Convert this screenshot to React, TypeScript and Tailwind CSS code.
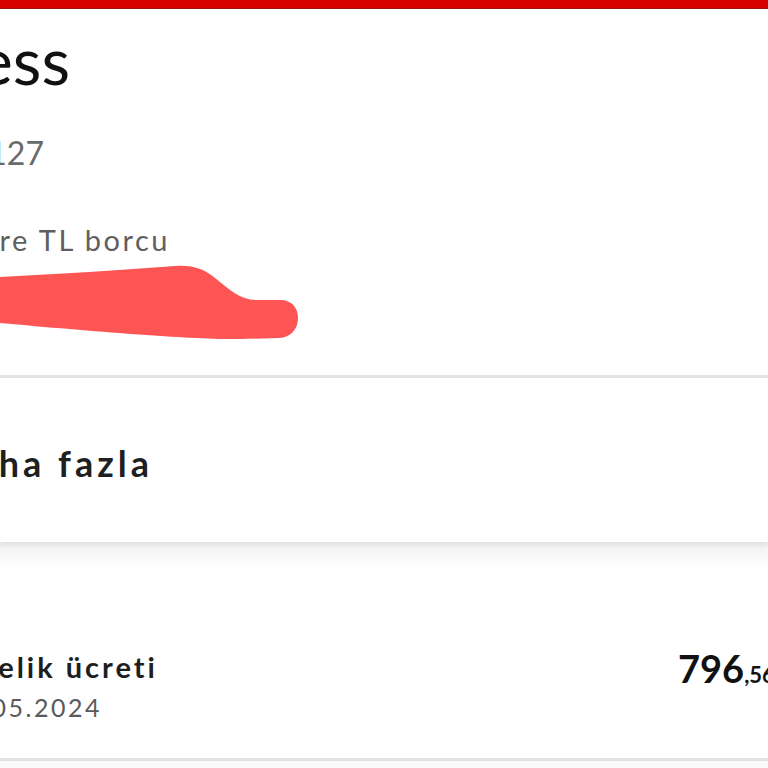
import React from "react";

export default function App() {
  return (
    <div className="w-[768px] h-[768px] overflow-hidden bg-white font-['Lato',sans-serif] flex flex-col">
      {/* top red bar */}
      <div className="h-[9px] shrink-0 bg-[#d90000] border-b border-[#9e1111] shadow-[0_2px_3px_rgba(230,0,0,0.15)]" />

      {/* card 1 */}
      <section className="h-[366px] shrink-0 bg-white flex flex-col">
        <div className="mt-[18px]">
          <div className="flex justify-end whitespace-nowrap w-[70px] text-[66px] leading-[66px] text-[#111]">
            <span className="shrink-0">Business</span>
          </div>
        </div>
        <div className="mt-[44px]">
          <div className="flex justify-end whitespace-nowrap w-[44px] text-[32px] leading-[32px] text-[#6a6a6a]">
            <span className="shrink-0">Hesap no: 1234127</span>
          </div>
        </div>
        <div className="mt-[56px]">
          <div className="flex justify-end whitespace-nowrap w-[170px] text-[29px] leading-[29px] tracking-[2.5px] text-[#5f5f5f]">
            <span className="shrink-0">Fatura dönemine göre TL borcu</span>
          </div>
        </div>
        <div className="mt-[8px] h-[80px] w-[300px]">
          <svg width="300" height="80" viewBox="0 0 300 80">
            <path
              d="M0 15 C60 12, 120 8, 175 4 C195 3, 205 8, 215 16 C230 28, 240 38, 257 38 L280 38 C292 38, 298 46, 298 56 C298 68, 290 76, 278 76 L240 77 C200 78, 100 70, 0 61 Z"
              fill="#fd5454"
            />
          </svg>
        </div>
      </section>

      {/* separator */}
      <div className="h-[3px] shrink-0 bg-[#e4e4e4]" />

      {/* card 2 */}
      <section className="h-[164px] shrink-0 bg-white flex flex-col shadow-[0_3px_6px_rgba(0,0,0,0.08)] relative">
        <div className="mt-[67px]">
          <div className="flex justify-end whitespace-nowrap w-[153px] text-[36px] leading-[36px] tracking-[4px] font-bold text-[#1f1f1f]">
            <span className="shrink-0">Daha fazla</span>
          </div>
        </div>
      </section>

      {/* shadow gap */}
      <div className="h-[28px] shrink-0 bg-gradient-to-b from-[#f1f1f1] to-white" />

      {/* list row */}
      <section className="shrink-0 bg-white flex flex-col">
        <div className="h-[188px] flex">
          <div className="w-[678px] shrink-0 flex flex-col">
            <div className="mt-[82px]">
              <div className="flex justify-end whitespace-nowrap w-[158px] text-[29px] leading-[29px] tracking-[3px] font-bold text-[#1e1e1e]">
                <span className="shrink-0">Aylık üyelik ücreti</span>
              </div>
            </div>
            <div className="mt-[14px]">
              <div className="flex justify-end whitespace-nowrap w-[102px] text-[25px] leading-[25px] tracking-[2.5px] text-[#5a5a5a]">
                <span className="shrink-0">21.05.2024</span>
              </div>
            </div>
          </div>
          <div className="shrink-0 whitespace-nowrap mt-[79px] text-[#111] font-bold">
            <span className="text-[38px] leading-[38px]">796</span>
            <span className="text-[22px] leading-[22px]">,56 TL</span>
          </div>
        </div>
        <div className="h-[3px] bg-[#e2e2e2]" />
        <div className="h-[10px] bg-[#fafafa]" />
      </section>
    </div>
  );
}
